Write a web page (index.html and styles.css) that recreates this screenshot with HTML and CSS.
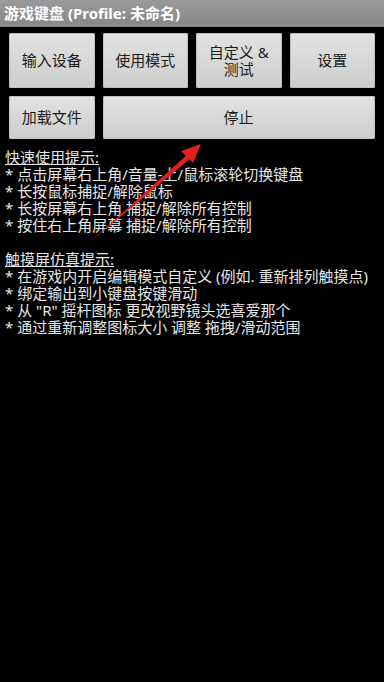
FILE: index.html
```html
<!DOCTYPE html>
<html lang="zh">
<head>
<meta charset="utf-8">
<link rel="stylesheet" href="styles.css">
</head>
<body>
<div class="titlebar">游戏键盘 (Profile: 未命名)</div>
<div class="buttons">
  <div class="btn tall">输入设备</div>
  <div class="btn tall">使用模式</div>
  <div class="btn tall">自定义 &amp;<br>测试</div>
  <div class="btn tall">设置</div>
  <div class="btn short">加载文件</div>
  <div class="btn short wide">停止</div>
</div>
<div class="tips">
  <div class="head">快速使用提示:</div>
  <div>* 点击屏幕右上角/音量-上/鼠标滚轮切换键盘</div>
  <div>* 长按鼠标捕捉/解除鼠标</div>
  <div>* 长按屏幕右上角 捕捉/解除所有控制</div>
  <div>* 按住右上角屏幕 捕捉/解除所有控制</div>
  <div class="blank">&nbsp;</div>
  <div class="head">触摸屏仿真提示:</div>
  <div>* 在游戏内开启编辑模式自定义 (例如. 重新排列触摸点)</div>
  <div>* 绑定输出到小键盘按键滑动</div>
  <div>* 从 "R" 摇杆图标 更改视野镜头选喜爱那个</div>
  <div>* 通过重新调整图标大小 调整 拖拽/滑动范围</div>
</div>
<svg class="arrow" width="384" height="682" viewBox="0 0 384 682">
  <polygon points="90,242 188,154 191,158" fill="#e3211c"/>
  <polygon points="201,144 181,151 193,163" fill="#e3211c"/>
</svg>
</body>
</html>
```
FILE: styles.css
```css
html, body {
  margin: 0;
  padding: 0;
  background: #000;
  width: 384px;
  height: 682px;
  overflow: hidden;
  font-family: "Noto Sans", "Noto Sans CJK SC", sans-serif;
  position: relative;
}
.titlebar {
  height: 27px;
  line-height: 27px;
  background: linear-gradient(#9a9a9a, #868686);
  color: #fff;
  font-weight: bold;
  font-size: 15px;
  padding-left: 4px;
}
.buttons {
  display: grid;
  grid-template-columns: repeat(4, 1fr);
  grid-template-rows: 55px 43px;
  column-gap: 8px;
  row-gap: 8px;
  padding: 6px 9px 0 9px;
}
.btn {
  display: flex;
  align-items: center;
  justify-content: center;
  text-align: center;
  background: linear-gradient(#e2e2e2, #cdcdcd);
  border-radius: 2px;
  box-shadow: inset 0 0 0 1px #bdbdbd;
  color: #1c1c1c;
  font-size: 15px;
  line-height: 17px;
}
.btn.wide {
  grid-column: 2 / 5;
  justify-content: flex-start;
  padding-left: 121px;
}
.tips {
  padding: 10px 0 0 5px;
  color: #e6e6e6;
  font-size: 15px;
  line-height: 17px;
  white-space: nowrap;
}
.head {
  text-decoration: underline;
}
.arrow {
  position: absolute;
  left: 0;
  top: 0;
}
```
